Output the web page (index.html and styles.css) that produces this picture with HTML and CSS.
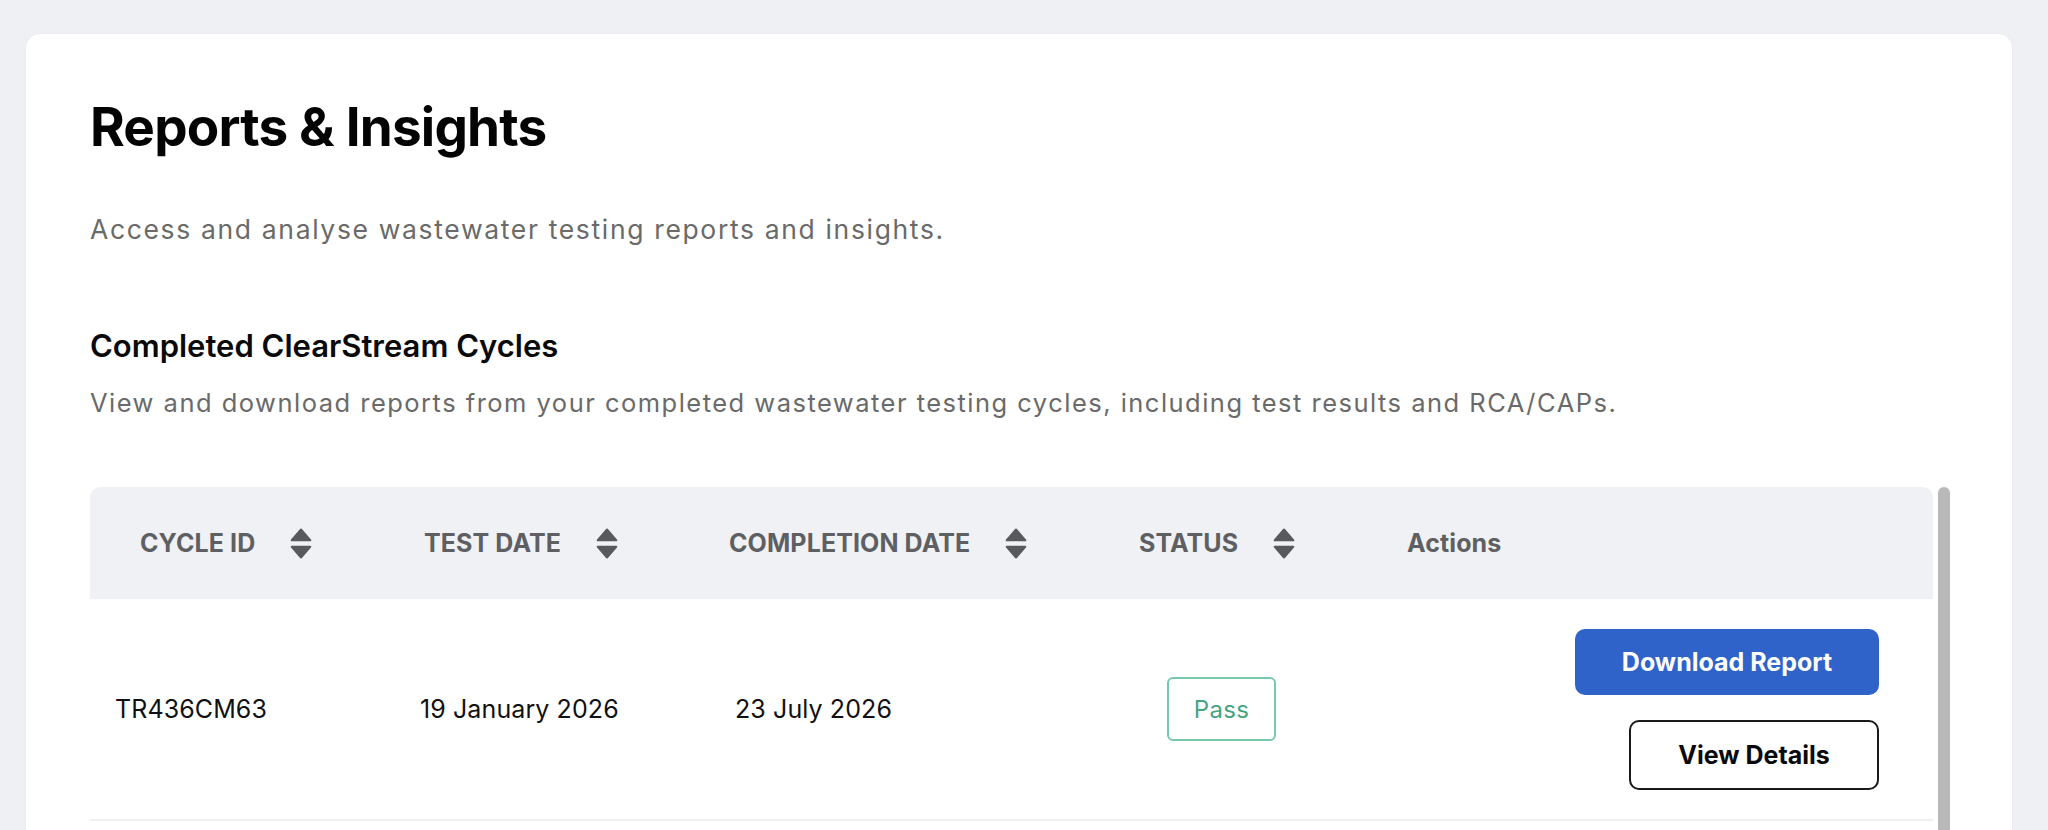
FILE: index.html
```html
<!DOCTYPE html>
<html lang="en">
<head>
<meta charset="utf-8">
<title>Reports &amp; Insights</title>
<link rel="stylesheet" href="styles.css">
</head>
<body>
<main class="page">
  <section class="card">
    <h1 class="title">Reports &amp; Insights</h1>
    <p class="subtitle">Access and analyse wastewater testing reports and insights.</p>
    <h2 class="section-title">Completed ClearStream Cycles</h2>
    <p class="section-desc">View and download reports from your completed wastewater testing cycles, including test results and RCA/CAPs.</p>
    <div class="table-wrap">
      <div class="table">
        <div class="thead">
          <div class="th c1"><span>CYCLE ID</span><svg class="sort" viewBox="0 0 22 31"><path d="M9.6 1.4a1.8 1.8 0 0 1 2.8 0l8.6 10.1a1 1 0 0 1-.8 1.7H1.8a1 1 0 0 1-.8-1.7z"/><path d="M9.6 29.6a1.8 1.8 0 0 0 2.8 0l8.6-10.1a1 1 0 0 0-.8-1.7H1.8a1 1 0 0 0-.8 1.7z"/></svg></div>
          <div class="th c2"><span>TEST DATE</span><svg class="sort" viewBox="0 0 22 31"><path d="M9.6 1.4a1.8 1.8 0 0 1 2.8 0l8.6 10.1a1 1 0 0 1-.8 1.7H1.8a1 1 0 0 1-.8-1.7z"/><path d="M9.6 29.6a1.8 1.8 0 0 0 2.8 0l8.6-10.1a1 1 0 0 0-.8-1.7H1.8a1 1 0 0 0-.8 1.7z"/></svg></div>
          <div class="th c3"><span>COMPLETION DATE</span><svg class="sort" viewBox="0 0 22 31"><path d="M9.6 1.4a1.8 1.8 0 0 1 2.8 0l8.6 10.1a1 1 0 0 1-.8 1.7H1.8a1 1 0 0 1-.8-1.7z"/><path d="M9.6 29.6a1.8 1.8 0 0 0 2.8 0l8.6-10.1a1 1 0 0 0-.8-1.7H1.8a1 1 0 0 0-.8 1.7z"/></svg></div>
          <div class="th c4"><span>STATUS</span><svg class="sort" viewBox="0 0 22 31"><path d="M9.6 1.4a1.8 1.8 0 0 1 2.8 0l8.6 10.1a1 1 0 0 1-.8 1.7H1.8a1 1 0 0 1-.8-1.7z"/><path d="M9.6 29.6a1.8 1.8 0 0 0 2.8 0l8.6-10.1a1 1 0 0 0-.8-1.7H1.8a1 1 0 0 0-.8 1.7z"/></svg></div>
          <div class="th c5"><span class="actions-label">Actions</span></div>
        </div>
        <div class="tr">
          <div class="td d1">TR436CM63</div>
          <div class="td d2">19 January 2026</div>
          <div class="td d3">23 July 2026</div>
          <div class="td d4"><span class="badge">Pass</span></div>
          <div class="td d5">
            <button class="btn btn-primary" type="button">Download Report</button>
            <button class="btn btn-outline" type="button">View Details</button>
          </div>
        </div>
      </div>
      <div class="scrollbar"></div>
    </div>
  </section>
</main>
</body>
</html>
```

FILE: styles.css
```css
* { box-sizing: border-box; }
html, body { margin: 0; padding: 0; }
body {
  background: #eff0f3;
  font-family: Inter, "Noto Sans", "Liberation Sans", sans-serif;
  color: #0b0b0b;
  width: 2048px;
  height: 830px;
  overflow: hidden;
}
.page {
  padding: 34px 36px 0 26px;
}
.card {
  background: #ffffff;
  border-radius: 14px;
  padding: 61px 62px 0 64px;
  height: 900px;
  box-shadow: 0 0 2px rgba(0,0,0,0.06);
}
.title {
  margin: 0;
  font-size: 53px;
  line-height: 64px;
  font-weight: 700;
  letter-spacing: -0.8px;
  color: #030303;
}
.subtitle {
  margin: 54px 0 0;
  font-size: 26.5px;
  line-height: 32px;
  font-weight: 400;
  letter-spacing: 1.65px;
  color: #6a6a6a;
}
.section-title {
  margin: 82px 0 0;
  font-size: 31px;
  line-height: 38px;
  font-weight: 600;
  letter-spacing: 0;
  color: #0a0a0a;
}
.section-desc {
  margin: 22px 0 0;
  font-size: 25.5px;
  line-height: 31px;
  font-weight: 400;
  letter-spacing: 1.48px;
  color: #6a6a6a;
}
.table-wrap {
  margin-top: 69px;
  display: flex;
  gap: 5px;
  width: 1860px;
}
.table {
  flex: 1;
}
.thead {
  display: grid;
  grid-template-columns: 284px 305px 410px 268px 1fr;
  height: 112px;
  background: #f0f1f4;
  border-radius: 10px 10px 0 0;
  align-items: center;
}
.th {
  display: flex;
  align-items: center;
  padding-left: 50px;
  font-size: 25px;
  font-weight: 700;
  color: #5e5f63;
  letter-spacing: 0.1px;
}
.sort {
  width: 22px;
  height: 31px;
  margin-left: 35px;
  fill: #57595d;
}
.tr {
  display: grid;
  grid-template-columns: 284px 305px 410px 268px 1fr;
  height: 222px;
  align-items: center;
  border-bottom: 2px solid #f0f0f2;
}
.td {
  font-size: 25px;
  font-weight: 400;
  color: #111111;
  letter-spacing: 0.1px;
}
.d1 { padding-left: 25px; }
.d2 { padding-left: 46px; }
.d3 { padding-left: 56px; }
.d4 { padding-left: 78px; }
.d5 {
  display: flex;
  flex-direction: column;
  align-items: flex-end;
  gap: 25px;
  padding-right: 54px;
}
.badge {
  display: inline-flex;
  align-items: center;
  justify-content: center;
  width: 109px;
  height: 64px;
  border: 2px solid #7ac8aa;
  border-radius: 6px;
  color: #45a482;
  font-size: 24px;
  letter-spacing: 0.3px;
}
.btn {
  font-family: inherit;
  font-size: 25px;
  font-weight: 700;
  letter-spacing: 0;
  border-radius: 10px;
  cursor: pointer;
  display: inline-flex;
  align-items: center;
  justify-content: center;
}
.btn-primary {
  width: 304px;
  height: 66px;
  background: #2f63c9;
  color: #ffffff;
  border: none;
}
.btn-outline {
  width: 250px;
  height: 70px;
  background: #ffffff;
  color: #0a0a0a;
  border: 2px solid #1a1a1a;
}
.scrollbar {
  width: 12px;
  height: 400px;
  background: #b9b9b9;
  border-radius: 6px 6px 0 0;
  flex: none;
}
```
